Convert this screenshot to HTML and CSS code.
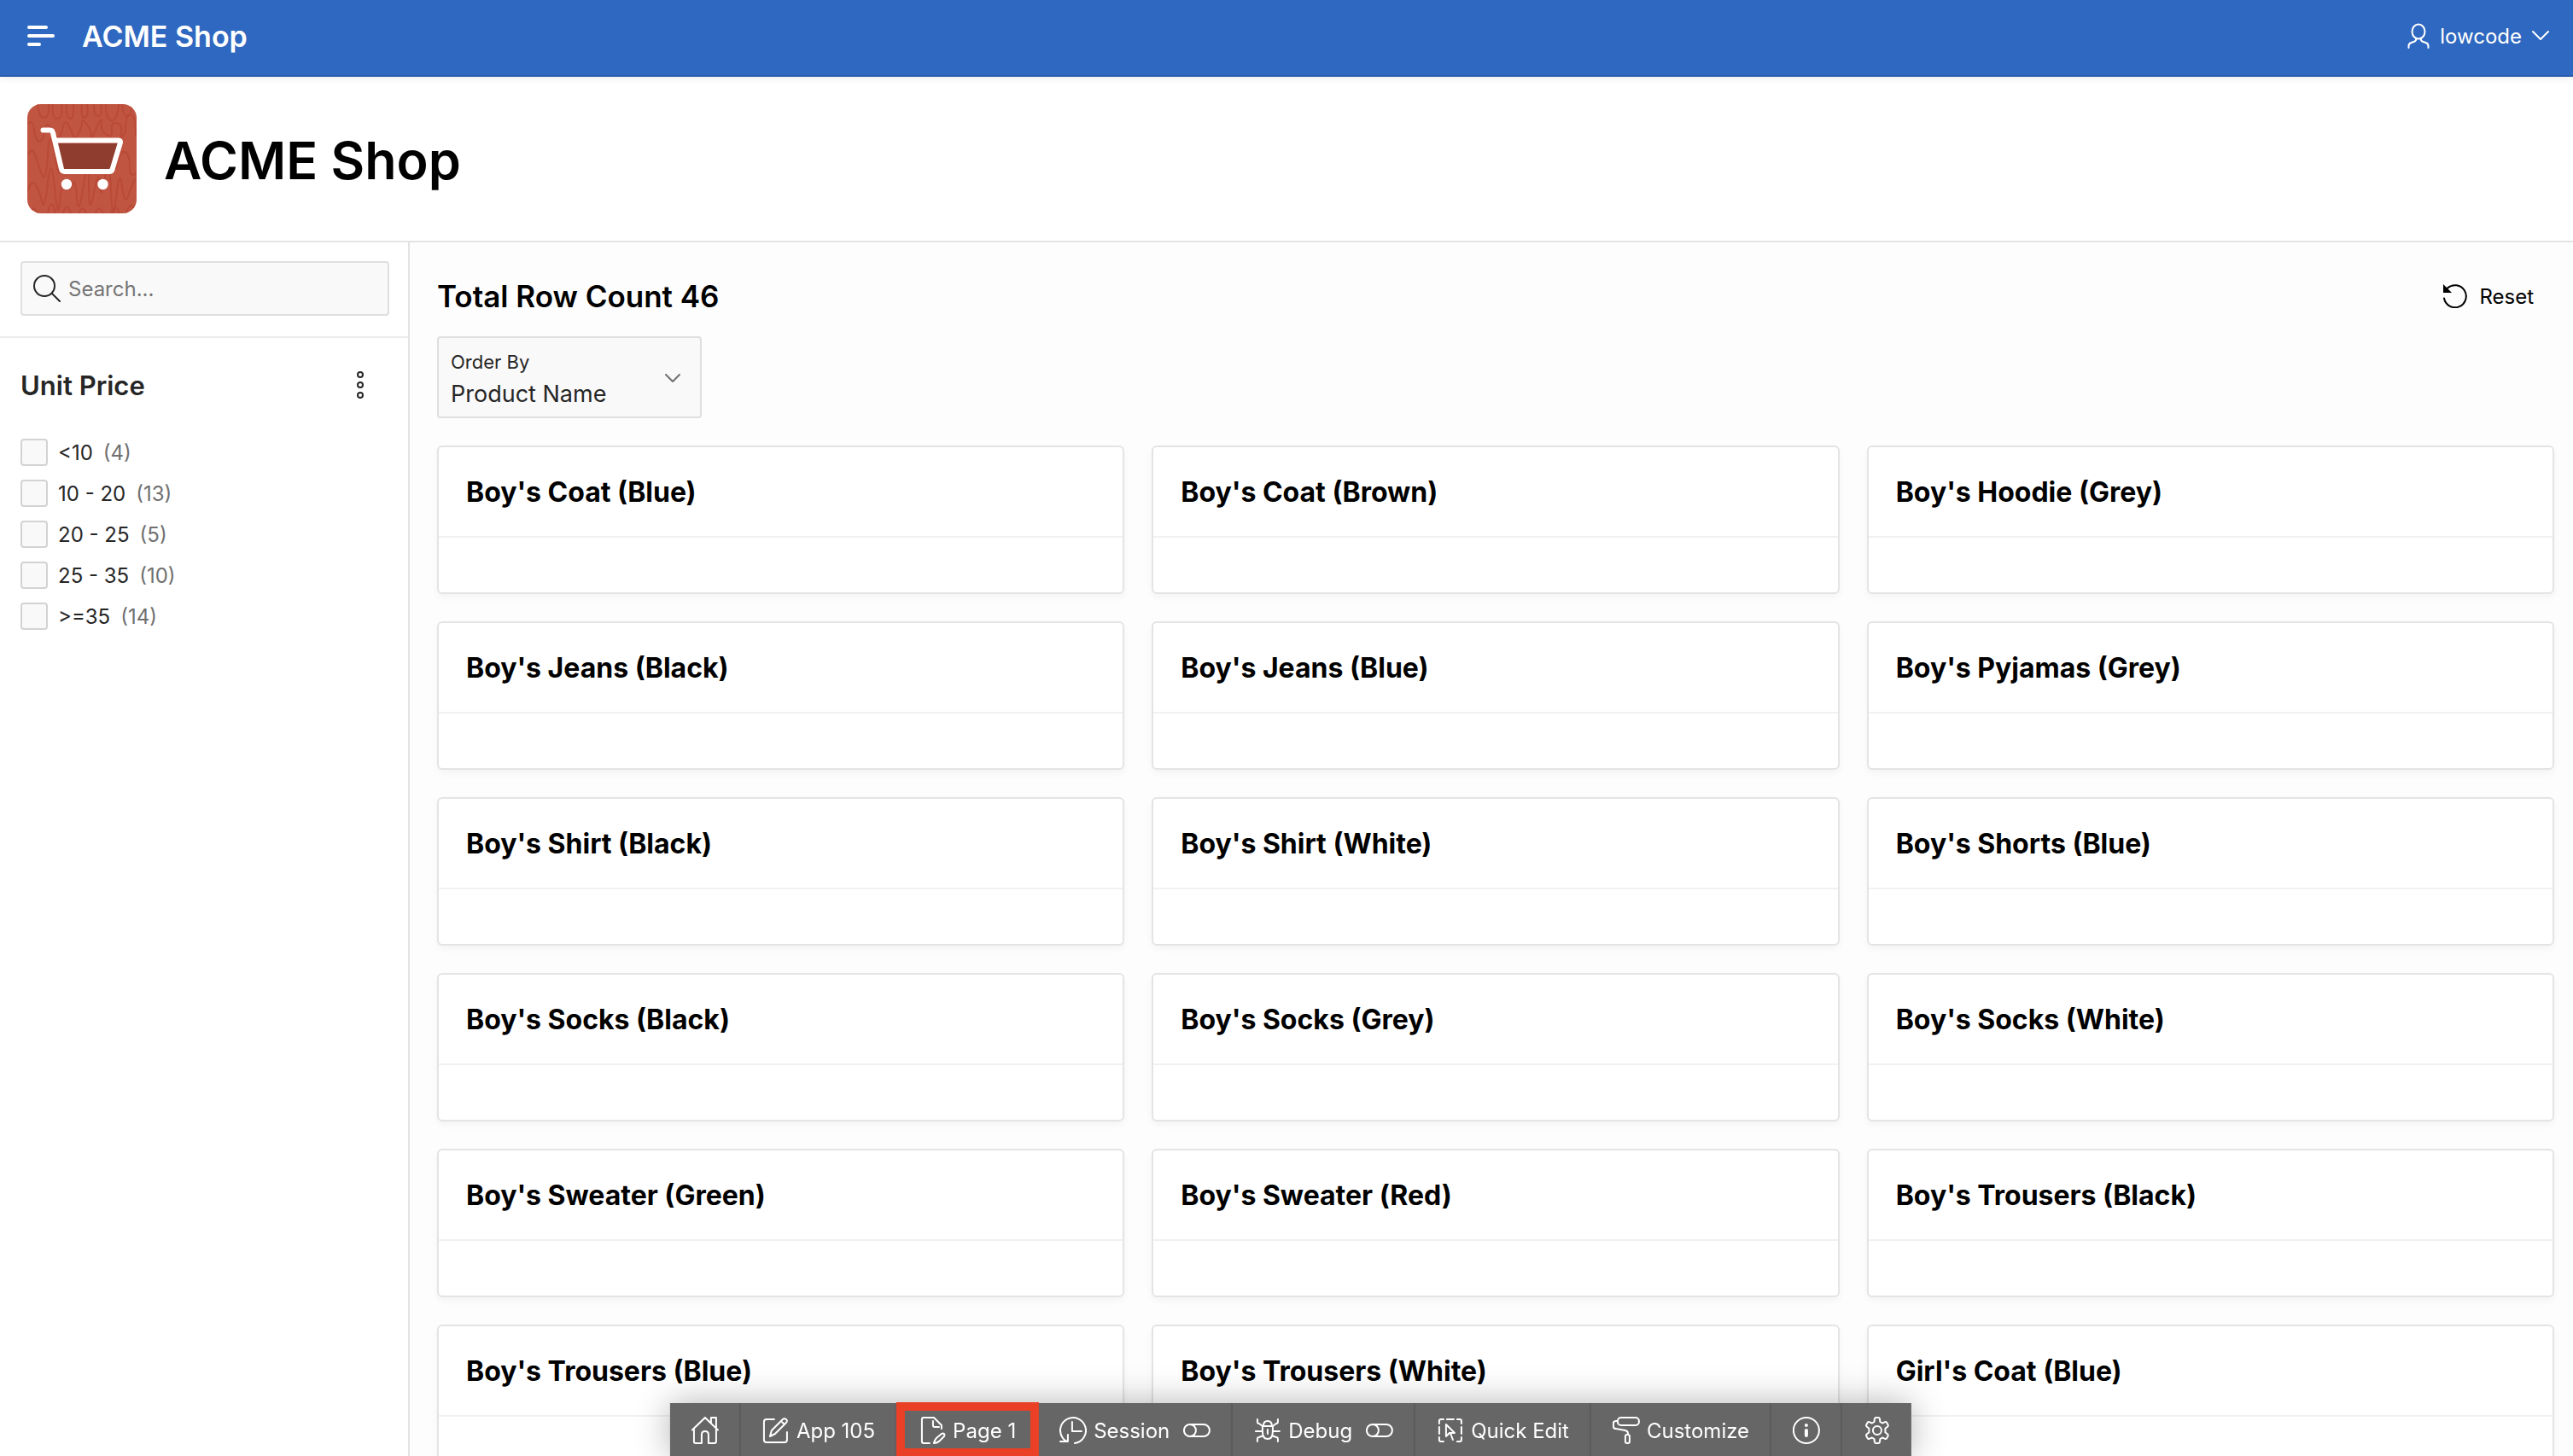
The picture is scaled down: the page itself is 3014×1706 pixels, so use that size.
FILE: index.html
```html
<!DOCTYPE html>
<html lang="en">
<head>
<meta charset="utf-8">
<title>ACME Shop</title>
<link rel="stylesheet" href="styles.css">
</head>
<body>
<header class="topbar">
  <button class="icon-btn" aria-label="Main menu">
    <svg width="32" height="24" viewBox="0 0 32 24" fill="currentColor"><rect width="24" height="4" rx="2"/><rect y="10" width="32" height="4" rx="2"/><rect y="20" width="16" height="4" rx="2"/></svg>
  </button>
  <a class="brand" href="#">ACME Shop</a>
  <button class="user">
    <svg width="26" height="32" viewBox="0 0 26 32" class="line"><ellipse cx="13" cy="11" rx="7.500" ry="8.500"/><path d="M1.500 30v-2q0-3 3-4l3-1q3-1 3-4M24.500 30v-2q0-3-3-4l-3-1q-3-1-3-4"/></svg>
    <span>lowcode</span>
    <svg width="20" height="12" viewBox="0 0 20 12" class="line"><path d="M1 1l9 9 9-9"/></svg>
  </button>
</header>

<section class="hero">
  <svg class="logo" width="128" height="128" viewBox="0 0 128 128">
    <defs><clipPath id="tile"><rect width="128" height="128" rx="16"/></clipPath></defs>
    <g clip-path="url(#tile)">
      <rect width="128" height="128" fill="#c05542"/>
      <g fill="none" stroke="#b94a37" stroke-width="2">
        <path d="M12 0q2 17 8 16T25 0M30 0q-2 17 5 17T40 0M46 0q-1 16 4 17T54 0M64 0q-2 16 3 16T70 0M78 0q0 14 5 14T86 0M92 0q0 19 7 19T107 0M111 0q1 14 6 14T122 0"/>
        <path d="M0 24q6-8 8 6t6 14 6-12 6-6 6 10 5 2 5-12 7 0 5 14 5-4 5-14 6 2 5 14 6-10 6-6 6 14 6-6 6-8 5 12 5-2q0-20 6-20t6 26"/>
        <path d="M0 60q6-12 10 2t8 22 6-26 8 0 6 18M104 76q4-22 10-20t6 18 10 4"/>
        <path d="M0 104q4-16 9-10t8 20 7-22 8 6 6 16 7-18 8-2 5 16 8-16 6 0 6 10 7-10 6-8 7 16 6 8 7-14 7 12 7-18 9 10"/>
        <path d="M4 128q3-12 8 0M24 128q4-22 9 0M42 128q4-16 9 0M60 128q5-12 9 0M80 128q3-12 9 0M98 128q5-14 10 0M116 128q5-16 10-4"/>
      </g>
      <path d="M34 46h76l-10 32H41z" fill="#8f3d2f"/>
      <path d="M18.500 30.500h8q3 0 3.700 4L40 76q.6 3 4 3h52q3 0 3.700-3L109 45q.4-2.500-2-2.500H33" fill="none" stroke="#fff" stroke-width="6" stroke-linecap="round" stroke-linejoin="round"/>
      <circle cx="46" cy="94" r="6.200" fill="#fff"/><circle cx="88.500" cy="94" r="6.200" fill="#fff"/>
    </g>
  </svg>
  <h1>ACME Shop</h1>
</section>

<div class="layout">
  <aside class="sidebar">
    <form class="search">
      <label class="search-box">
        <svg width="34" height="34" viewBox="0 0 34 34" class="line"><circle cx="14" cy="14" r="12"/><path d="M23 23l9 9"/></svg>
        <input type="search" placeholder="Search..." aria-label="Search">
      </label>
    </form>
    <section class="facet">
      <div class="facet-head">
        <h2>Unit Price</h2>
        <button class="icon-btn" aria-label="Unit Price actions">
          <svg width="8" height="32" viewBox="0 0 8 32" class="line"><circle cx="4" cy="4" r="3"/><circle cx="4" cy="16" r="3"/><circle cx="4" cy="28" r="3"/></svg>
        </button>
      </div>
      <label class="option"><input type="checkbox"><span>&lt;10</span><span class="count">(4)</span></label>
      <label class="option"><input type="checkbox"><span>10 - 20</span><span class="count">(13)</span></label>
      <label class="option"><input type="checkbox"><span>20 - 25</span><span class="count">(5)</span></label>
      <label class="option"><input type="checkbox"><span>25 - 35</span><span class="count">(10)</span></label>
      <label class="option"><input type="checkbox"><span>&gt;=35</span><span class="count">(14)</span></label>
    </section>
  </aside>

  <main class="content">
    <div class="content-head">
      <h2>Total Row Count 46</h2>
      <button class="reset">
        <svg width="28" height="28" viewBox="0 0 28 28" class="line"><path d="M1 16.500A13 13 0 1 0 5 4.600"/><path d="M0 0l10 10H0z" fill="currentColor" stroke="none"/></svg>
        <span>Reset</span>
      </button>
    </div>
    <div class="order">
      <label for="order-by">Order By</label>
      <select id="order-by"><option>Product Name</option></select>
      <svg class="order-arrow line" width="18" height="12" viewBox="0 0 18 12"><path d="M1 1l8 8 8-8"/></svg>
    </div>
    <ul class="cards">
      <li class="card"><h3>Boy's Coat (Blue)</h3></li>
      <li class="card"><h3>Boy's Coat (Brown)</h3></li>
      <li class="card"><h3>Boy's Hoodie (Grey)</h3></li>
      <li class="card"><h3>Boy's Jeans (Black)</h3></li>
      <li class="card"><h3>Boy's Jeans (Blue)</h3></li>
      <li class="card"><h3>Boy's Pyjamas (Grey)</h3></li>
      <li class="card"><h3>Boy's Shirt (Black)</h3></li>
      <li class="card"><h3>Boy's Shirt (White)</h3></li>
      <li class="card"><h3>Boy's Shorts (Blue)</h3></li>
      <li class="card"><h3>Boy's Socks (Black)</h3></li>
      <li class="card"><h3>Boy's Socks (Grey)</h3></li>
      <li class="card"><h3>Boy's Socks (White)</h3></li>
      <li class="card"><h3>Boy's Sweater (Green)</h3></li>
      <li class="card"><h3>Boy's Sweater (Red)</h3></li>
      <li class="card"><h3>Boy's Trousers (Black)</h3></li>
      <li class="card"><h3>Boy's Trousers (Blue)</h3></li>
      <li class="card"><h3>Boy's Trousers (White)</h3></li>
      <li class="card"><h3>Girl's Coat (Blue)</h3></li>
    </ul>
  </main>
</div>

<nav class="devbar" aria-label="Developer toolbar">
  <button aria-label="Home">
    <svg width="32" height="32" viewBox="0 0 32 32" class="line"><path d="M1 15.500L16 1l15 14.500M3 14v15q0 2 2 2h7V21q0-4 4-4t4 4v10h7q2 0 2-2V14M23 7V1h6v12"/></svg>
  </button>
  <button>
    <svg width="32" height="32" viewBox="0 0 32 32" class="line"><path d="M14 3H5q-3 0-3 3v21q0 3 3 3h21q3 0 3-3V18M9 23l2-7L24 3q2-1.500 4 0t0 4L15 20zM22 5l4 4"/></svg>
    <span>App 105</span>
  </button>
  <button class="marked">
    <svg width="32" height="32" viewBox="0 0 32 32" class="line"><path d="M13 31H6q-2 0-2-2V3q0-2 2-2h12l9 9v4M17 5v5q0 2 2 2h5M18 31q1-4 3-6l6-5q2-1 3 0t0 3l-5 5q-3 3-7 3z"/></svg>
    <span>Page 1</span>
  </button>
  <button>
    <svg width="32" height="32" viewBox="0 0 32 32" class="line"><path d="M18 31A15 15 0 1 0 4 25q3 4 6 4M10 21v8H1M15 6v11h11"/></svg>
    <span>Session</span>
    <svg class="switch line" width="32" height="16" viewBox="0 0 32 16"><rect x="1" y="1" width="30" height="14" rx="7"/><path d="M8 1a7 7 0 0 1 0 14"/></svg>
  </button>
  <button>
    <svg width="32" height="32" viewBox="0 0 32 32" class="line"><path d="M10 11h12v6q0 9-6 9t-6-9zM11 11q0-6 5-6t5 6M16 15v5M4 3v3q0 2 2 2l4 3M28 3v3q0 2-2 2l-4 3M2 17h8M22 17h8M4 29v-3q0-2 2-2l5-2M28 29v-3q0-2-2-2l-5-2"/></svg>
    <span>Debug</span>
    <svg class="switch line" width="32" height="16" viewBox="0 0 32 16"><rect x="1" y="1" width="30" height="14" rx="7"/><path d="M8 1a7 7 0 0 1 0 14"/></svg>
  </button>
  <button>
    <svg width="32" height="32" viewBox="0 0 32 32" class="line"><path d="M3 8V5q0-2 2-2h3M12 3h8M24 3h3q2 0 2 2v3M29 12v8M29 24v3q0 2-2 2h-3M3 24v3q0 2 2 2h3M3 12v8M11 9v14l4-4h6zM16 19l3 8"/></svg>
    <span>Quick Edit</span>
  </button>
  <button>
    <svg width="32" height="32" viewBox="0 0 32 32" class="line"><rect x="6" y="1" width="25" height="9" rx="4"/><path d="M6 5H4q-3 0-3 3v3q0 3 3 3l11 2q3 1 3 3v2"/><rect x="15" y="21" width="5" height="10" rx="2"/></svg>
    <span>Customize</span>
  </button>
  <button aria-label="Info">
    <svg width="32" height="32" viewBox="0 0 32 32" class="line"><circle cx="16" cy="16" r="15"/><circle cx="16" cy="10" r="2" fill="currentColor" stroke="none"/><rect x="14" y="14" width="4" height="10" rx="2" fill="currentColor" stroke="none"/></svg>
  </button>
  <button aria-label="Settings">
    <svg width="32" height="32" viewBox="0 0 32 32" class="line"><circle cx="16" cy="16" r="5"/><path d="M13 2.500q.3-1.500 1.500-1.500h3q1.200 0 1.500 1.500l.5 3.500 2.500 1.500 3.300-1.400q1.200-.4 1.900.7l1.500 2.700q.6 1.100-.4 2L25.500 13.700v4.600l2.800 2.200q1 .9.400 2l-1.500 2.700q-.7 1.100-1.900.7L22 24.500 19.500 26l-.5 3.500q-.3 1.500-1.500 1.500h-3q-1.200 0-1.500-1.500l-.5-3.500L10 24.500l-3.300 1.400q-1.200.4-1.900-.7l-1.500-2.700q-.6-1.100.4-2l2.800-2.200v-4.600L3.700 11.500q-1-.9-.4-2l1.500-2.700q.7-1.100 1.900-.7L10 7.500 12.500 6z"/></svg>
  </button>
</nav>
</body>
</html>
```
FILE: styles.css
```css
* { box-sizing: border-box; margin: 0; }

body {
  display: flex;
  flex-direction: column;
  height: 100vh;
  overflow: hidden;
  background: #fff;
  color: #262626;
  font: 24px/32px Inter, "Liberation Sans", sans-serif;
}

button, input, select { font: inherit; color: inherit; }
button { border: 0; padding: 0; background: none; }
svg { display: block; flex: none; }
span { padding-top: 2px; }

.line {
  fill: none;
  stroke: currentColor;
  stroke-width: 2;
  stroke-linecap: round;
  stroke-linejoin: round;
}

.topbar {
  display: flex;
  align-items: center;
  flex: none;
  height: 90px;
  padding: 0 28px 4px 32px;
  background: #2f68c0;
  border-bottom: 2px solid #2a5dac;
  box-shadow: 0 2px 8px rgba(0, 0, 0, .08);
  color: #fff;
}
.brand {
  margin-left: 32px;
  padding-top: 2px;
  color: inherit;
  font-size: 34px;
  font-weight: 600;
  line-height: 40px;
  text-decoration: none;
}
.user { display: flex; align-items: center; gap: 12px; margin-left: auto; }

.hero {
  display: flex;
  align-items: center;
  gap: 32px;
  flex: none;
  padding: 32px;
  border-bottom: 2px solid #e3e3e3;
}
.hero h1 {
  padding-top: 4px;
  color: #000;
  font-size: 61px;
  font-weight: 600;
  line-height: 80px;
}

.layout { display: flex; flex: 1; min-height: 0; }

.sidebar { flex: none; width: 480px; border-right: 2px solid #e3e3e3; }
.search { padding: 22px 22px 24px 24px; border-bottom: 2px solid #ececec; }
.search-box {
  display: flex;
  align-items: center;
  gap: 8px;
  height: 64px;
  padding: 0 12px;
  background: #f9f9f9;
  border: 2px solid #dfdfdf;
  border-radius: 4px;
}
.search-box input {
  flex: 1;
  min-width: 0;
  padding: 2px 0 0;
  border: 0;
  outline: 0;
  background: none;
}
.search-box input::placeholder { color: #757575; }
.facet { padding: 32px 24px; }
.facet-head {
  display: flex;
  align-items: center;
  justify-content: space-between;
  margin-bottom: 32px;
  padding-right: 28px;
}
.facet-head h2 {
  padding-top: 2px;
  font-size: 31px;
  font-weight: 600;
  line-height: 44px;
}
.option {
  display: flex;
  align-items: center;
  gap: 12px;
  height: 48px;
}
.option input {
  appearance: none;
  width: 32px;
  height: 32px;
  margin: 0;
  background: #f9f9f9;
  border: 2px solid #d3d3d3;
  border-radius: 4px;
}
.count { color: #707070; }

.content {
  flex: 1;
  min-width: 0;
  overflow: hidden;
  padding: 30px 22px 32px 32px;
  background: #fdfdfd;
}
.content-head {
  display: flex;
  align-items: center;
  justify-content: space-between;
  padding-right: 24px;
  color: #000;
}
.content-head h2 { font-size: 35px; font-weight: 600; line-height: 66px; }
.reset { display: flex; align-items: center; gap: 14px; }

.order {
  position: relative;
  width: 310px;
  height: 96px;
  margin: 14px 0 32px;
  background: #f9f9f9;
  border: 2px solid #dfdfdf;
  border-radius: 4px;
}
.order label {
  position: absolute;
  top: 12px;
  left: 14px;
  font-size: 22px;
}
.order select {
  appearance: none;
  width: 100%;
  height: 100%;
  padding: 40px 48px 0 14px;
  border: 0;
  background: none;
  font-size: 27px;
}
.order-arrow { position: absolute; top: 42px; right: 23px; color: #707070; }

.cards {
  display: grid;
  grid-template-columns: repeat(3, 1fr);
  gap: 32px;
  padding: 0;
  list-style: none;
}
.card {
  height: 174px;
  background: #fff;
  border: 2px solid #e4e4e4;
  border-radius: 6px;
  box-shadow: 0 4px 8px rgba(0, 0, 0, .04);
}
.card h3 {
  padding: 33px 32px 31px;
  border-bottom: 2px solid #f1f1f1;
  color: #000;
  font-size: 32px;
  font-weight: 700;
  line-height: 40px;
}

.devbar {
  position: fixed;
  bottom: 0;
  left: calc(50% + 5px);
  display: flex;
  height: 62px;
  transform: translateX(-50%);
  background: #666;
  box-shadow: 0 0 40px rgba(0, 0, 0, .3);
  color: #fff;
}
.devbar button {
  display: flex;
  align-items: center;
  gap: 8px;
  padding: 2px 24px 0 25px;
  border-right: 2px solid #5c5c5c;
  white-space: nowrap;
}
.devbar button:last-child { border-right: 0; }
.devbar .switch { margin-left: 8px; }
.devbar .marked { outline: 10px solid #ea4025; outline-offset: -9px; }
```
